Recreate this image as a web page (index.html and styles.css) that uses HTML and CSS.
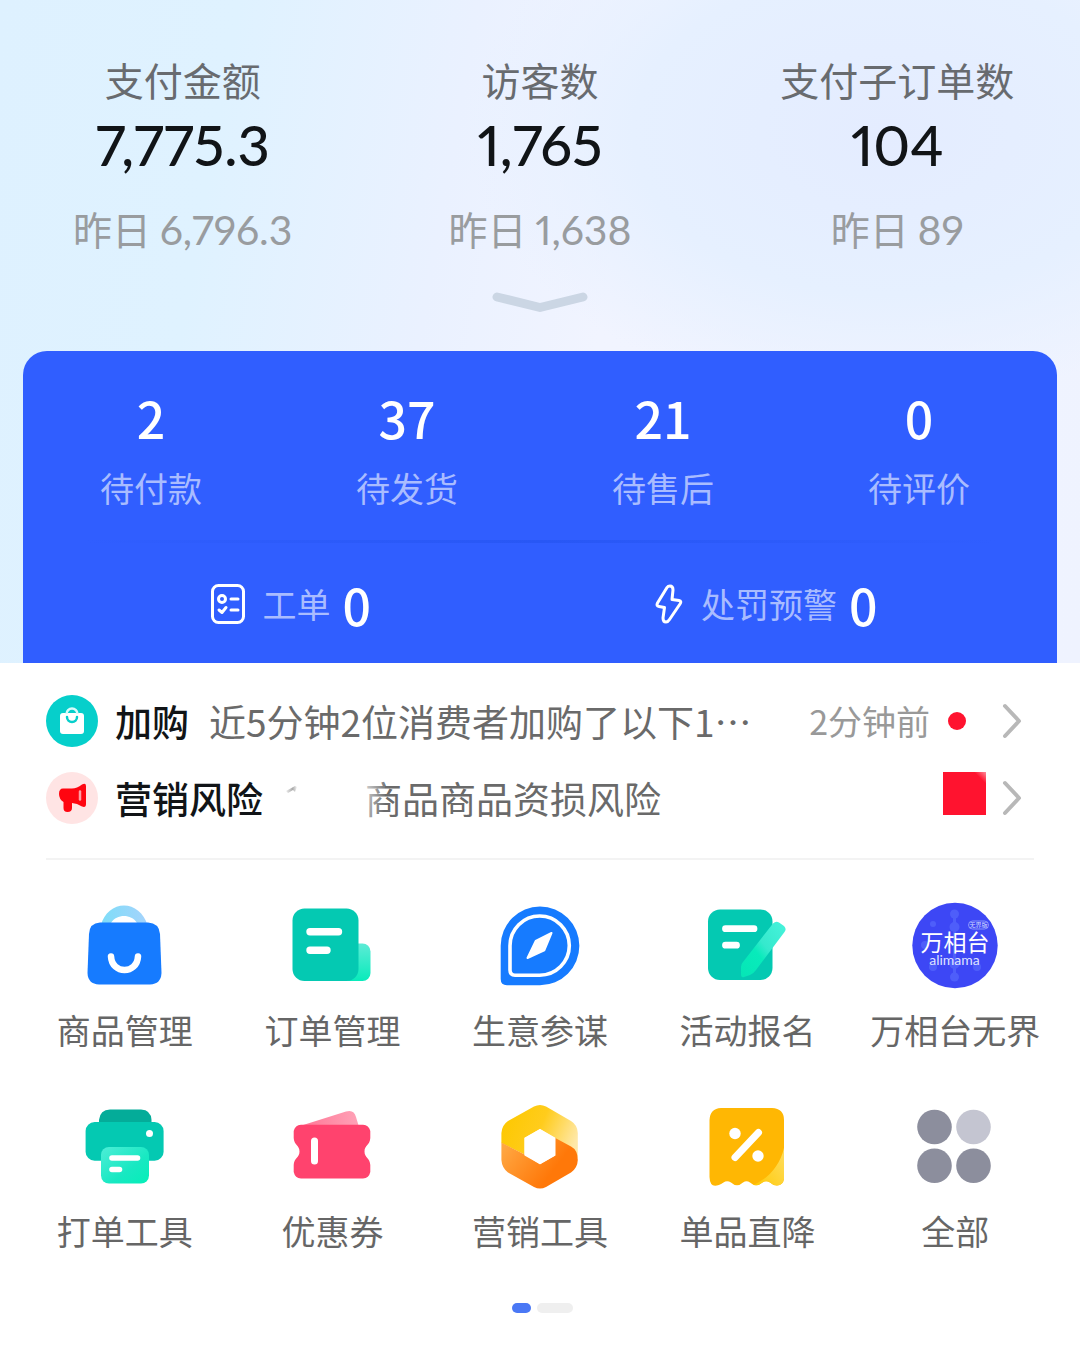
FILE: index.html
```html
<!DOCTYPE html>
<html lang="zh-CN">
<head>
<meta charset="utf-8">
<meta name="viewport" content="width=device-width, initial-scale=1">
<title>店铺工作台</title>
<link rel="stylesheet" href="styles.css">
</head>
<body>
<header class="hero">
  <section class="stats">
    <div class="stat"><h2 class="stat-label">支付金额</h2><p class="stat-value">7,775.3</p><p class="stat-prev">昨日 <span class="stat-num">6,796.3</span></p></div>
    <div class="stat"><h2 class="stat-label">访客数</h2><p class="stat-value">1,765</p><p class="stat-prev">昨日 <span class="stat-num">1,638</span></p></div>
    <div class="stat"><h2 class="stat-label">支付子订单数</h2><p class="stat-value">104</p><p class="stat-prev">昨日 <span class="stat-num">89</span></p></div>
  </section>
  <button class="expand" type="button" aria-label="展开">
    <svg width="96" height="24" viewBox="0 0 96 24" fill="none" stroke="#cbd6e4" stroke-width="9" stroke-linecap="round" stroke-linejoin="round"><path d="M5 7 48 17.500 91 7"/></svg>
  </button>
  <section class="panel">
    <div class="orders">
      <a class="order" href="#"><span class="order-num">2</span><span class="order-label">待付款</span></a>
      <a class="order" href="#"><span class="order-num">37</span><span class="order-label">待发货</span></a>
      <a class="order" href="#"><span class="order-num">21</span><span class="order-label">待售后</span></a>
      <a class="order" href="#"><span class="order-num">0</span><span class="order-label">待评价</span></a>
    </div>
    <div class="panel-line"></div>
    <div class="tasks">
      <a class="task" href="#">
        <svg width="34" height="40" viewBox="0 0 34 40" fill="none" stroke="#fff" stroke-width="3" stroke-linecap="round" stroke-linejoin="round"><rect x="1.500" y="1.500" width="31" height="37" rx="6"/><circle cx="11" cy="15" r="3.500"/><path d="M20 15h7M20 26h7M8 26l3 2.500 4-5"/></svg>
        <span class="task-label">工单</span><span class="task-num">0</span>
      </a>
      <a class="task" href="#">
        <svg width="28" height="40" viewBox="0 0 28 40" fill="none" stroke="#fff" stroke-width="3" stroke-linejoin="round"><path d="M12 3.500 2.500 19Q1 22 4 22.500L9.500 23.500 8 34Q8 38 11 38 13 38 14.500 35.500L25 20Q27 17 24 16.500L17 15.500 18 6Q18 2 15 2 13 2 12 3.500Z"/></svg>
        <span class="task-label">处罚预警</span><span class="task-num">0</span>
      </a>
    </div>
  </section>
</header>
<main>
  <section class="notices">
    <a class="notice" href="#">
      <svg class="notice-icon" viewBox="0 0 52 52"><circle cx="26" cy="26" r="26" fill="#06cfcb"/><path d="M17 18H35Q38 18 38 21V36Q38 39 35 39H17Q14 39 14 36V21Q14 18 17 18Z" fill="#fff"/><path d="M20.500 19a5.500 5.500 0 0 1 11 0" fill="none" stroke="#d9fbfa" stroke-width="2.500"/><path d="M21 22a5 5 0 0 0 10 0" fill="none" stroke="#06cfcb" stroke-width="2.500" stroke-linecap="round"/></svg>
      <strong class="notice-title">加购</strong>
      <span class="notice-text">近5分钟2位消费者加购了以下1…</span>
      <span class="notice-time">2分钟前</span><span class="dot"></span>
      <svg class="arrow" viewBox="0 0 20 36"><path d="M3 3 17 18 3 33"/></svg>
    </a>
    <a class="notice" href="#">
      <svg class="notice-icon" viewBox="0 0 52 52"><circle cx="26" cy="26" r="26" fill="#ffe4e4"/><path d="M17 16.500H26Q31 16.500 36 12.500 40 10.500 40 14V32Q40 36 36 34.500 31 31 26 31V36Q26 40 21.500 40 17.500 40 17.500 36V30Q13 27 13 22 13 16.500 17 16.500Z" fill="#ff0510"/><path d="M34 19.500v8" stroke="#ff9ea2" stroke-width="2.500" stroke-linecap="round"/></svg>
      <strong class="notice-title">营销风险</strong>
      <svg class="smudge" viewBox="0 0 14 12"><defs><linearGradient id="sm" x2="1"><stop stop-color="#eee"/><stop offset=".6" stop-color="#aaa"/><stop offset="1" stop-color="#f4f4f4"/></linearGradient></defs><path d="M1 6 10 1 12 2 10 7 8 5 3 8Z" fill="url(#sm)"/></svg>
      <span class="notice-text notice-text-faded">商品商品资损风险</span>
      <span class="square"></span>
      <svg class="arrow" viewBox="0 0 20 36"><path d="M3 3 17 18 3 33"/></svg>
    </a>
  </section>
  <nav class="tools">
    <a class="tool" href="#">
      <svg class="tool-icon" viewBox="0 0 88 88"><defs><linearGradient id="g1" x2="1"><stop stop-color="#7eddf8"/><stop offset="1" stop-color="#a5d3fc"/></linearGradient></defs><path fill-rule="evenodd" d="M20 23C23 11 33 3.500 43 3.500S63 11 66.500 23ZM30 21H56C53 16 48 14 43 14S33 16 30 21Z" fill="url(#g1)"/><path d="M19 20.500H67Q78 21 79 32L80.500 71Q80 82 69 82.500H18Q7 82 6.500 71L8 32Q8.500 21 19 20.500Z" fill="#167bff"/><path d="M30 54.500C31 72.500 56 72.500 57 54.500" fill="none" stroke="#fff" stroke-width="6.500" stroke-linecap="round"/></svg>
      <span class="tool-label">商品管理</span>
    </a>
    <a class="tool" href="#">
      <svg class="tool-icon" viewBox="-1 0 88 88"><defs><linearGradient id="g2" y2="1" x2="0"><stop stop-color="#5debd6"/><stop offset="1" stop-color="#08ebbb"/></linearGradient></defs><rect x="52" y="41.500" width="29.500" height="37.500" rx="8" fill="url(#g2)"/><rect x="3.500" y="6.500" width="66" height="72.500" rx="12" fill="#04c9b2"/><path d="M21 29.700H49.500M21 48.200H38" stroke="#fff" stroke-width="7.400" stroke-linecap="round"/></svg>
      <span class="tool-label">订单管理</span>
    </a>
    <a class="tool" href="#">
      <svg class="tool-icon" viewBox="0 0 88 88"><path d="M44 4.500A39.300 39.300 0 1 1 44 83.200H11Q4.700 83.200 4.700 77V43.800A39.300 39.300 0 0 1 44 4.500Z" fill="#167bff"/><path d="M43.700 14A29.600 29.600 0 1 1 43.700 73.200H19Q14 73.200 14 68V43.700A29.700 29.700 0 0 1 43.700 14Z" fill="none" stroke="#fff" stroke-width="3.600"/><path d="M55.500 31 39.700 39 31.500 56 48.300 48.300Z" fill="#fff" stroke="#fff" stroke-width="2" stroke-linejoin="round"/></svg>
      <span class="tool-label">生意参谋</span>
    </a>
    <a class="tool" href="#">
      <svg class="tool-icon" viewBox="1 0 88 88"><defs><linearGradient id="g4" x1="1" x2="0" y2="1"><stop stop-color="#48f3dc"/><stop offset=".45" stop-color="#35e9cd"/><stop offset=".6" stop-color="#08ebbb"/><stop offset="1" stop-color="#05e6b6"/></linearGradient></defs><rect x="5" y="7.500" width="64.500" height="70.500" rx="12" fill="#04c9b2"/><path d="M22.500 26.700H51M22.500 43.200H33.500" stroke="#fff" stroke-width="6.800" stroke-linecap="round"/><path d="M70 21.500Q73 18.500 76 20.500L81 24Q84 27 81.500 30L53 68Q51 71 47 73L41 75Q38 76 38 72V65Q38 62 40 60Z" fill="url(#g4)"/></svg>
      <span class="tool-label">活动报名</span>
    </a>
    <a class="tool" href="#">
      <svg class="tool-icon" viewBox="0 0 88 88"><circle cx="44" cy="43.500" r="42.700" fill="#3d47f5"/><g fill="#5d72ff" opacity=".55"><circle cx="43.500" cy="12" r="4.500"/><circle cx="43.500" cy="25" r="5"/><circle cx="43.500" cy="62" r="5"/><circle cx="43.500" cy="75" r="4.500"/><circle cx="22" cy="22" r="3"/><circle cx="14" cy="43" r="4"/><circle cx="22" cy="65" r="4"/><circle cx="66" cy="65" r="4"/><path d="M42 12h3v63h-3z"/></g><text class="logo-cn" x="44" y="49" text-anchor="middle">万相台</text><text class="logo-en" x="43.500" y="63" text-anchor="middle">alimama</text><rect x="57.500" y="19" width="20" height="8" rx="4" fill="none" stroke="#aab4ff" stroke-width=".7"/><text class="logo-tag" x="67.500" y="25" text-anchor="middle">无界版</text></svg>
      <span class="tool-label">万相台无界</span>
    </a>
    <a class="tool" href="#">
      <svg class="tool-icon" viewBox="0 0 88 88"><defs><linearGradient id="g6" x2="1" y2="1"><stop stop-color="#4deed7"/><stop offset=".6" stop-color="#18e8c2"/><stop offset="1" stop-color="#04efb8"/></linearGradient></defs><path d="M18 22V17Q19 6.500 29 6.500H60Q70 7 70.500 17V22Z" fill="#04ac99"/><rect x="4.600" y="19" width="78" height="38.700" rx="9" fill="#04c9b2"/><circle cx="68.500" cy="30.500" r="3.500" fill="#fff"/><rect x="20" y="44" width="48" height="36.500" rx="8" fill="url(#g6)"/><path d="M31 55H56.500M31 66.500H38.500" stroke="#fff" stroke-width="5.600" stroke-linecap="round"/></svg>
      <span class="tool-label">打单工具</span>
    </a>
    <a class="tool" href="#">
      <svg class="tool-icon" viewBox="-1 0 88 88"><defs><linearGradient id="g7" x2="1"><stop stop-color="#ff7594"/><stop offset="1" stop-color="#ffa2b7"/></linearGradient></defs><path d="M11 23 57 8.500Q65 6 67 14L70 24Z" fill="url(#g7)"/><path d="M12 21.700H74Q80 22 81.300 28V35C81 42 75.500 42 75.500 48.500S81 55 81.300 62V69Q80 75 74 75.500H12Q6 75 4.700 69V62C5 55 10.500 55 10.500 48.500S5 42 4.700 35V28Q6 22 12 21.700Z" fill="#ff436e"/><path d="M25.500 38V58" stroke="#fff" stroke-width="7" stroke-linecap="round"/></svg>
      <span class="tool-label">优惠券</span>
    </a>
    <a class="tool" href="#">
      <svg class="tool-icon" viewBox="0 0 88 88"><defs><linearGradient id="g8" x1="0" y1=".3" x2="1" y2=".6"><stop stop-color="#fdc800"/><stop offset=".5" stop-color="#ffcc1c"/><stop offset="1" stop-color="#ffe8a8"/></linearGradient><linearGradient id="g9" x2="1" y2=".5"><stop stop-color="#ffad49"/><stop offset=".8" stop-color="#ff7809"/></linearGradient></defs><path d="M38 3.500Q44 .500 50 3.500L75 18Q81.500 22 81.800 30V55L59 35 44 26 28.500 35V51.500L5.400 40V30Q6 22 12 18Z" fill="url(#g8)"/><path d="M5.400 39.500 28.500 51.500 44 61.300 59.300 52.500V35L75 43.500Q81.800 47 81.800 57 81.500 65 75 69.500L50 84Q44 87 38 84L12 69.500Q6 65 5.400 57Z" fill="url(#g9)"/><path d="M44 26 59.300 34.700V52.500L44 61.300 28.500 52.500V34.700Z" fill="#fff"/></svg>
      <span class="tool-label">营销工具</span>
    </a>
    <a class="tool" href="#">
      <svg class="tool-icon" viewBox="1 0 88 88"><defs><linearGradient id="g10" x1="1" x2="0" y2="1"><stop stop-color="#ffe06b"/><stop offset="1" stop-color="#ffc800"/></linearGradient><clipPath id="c10"><path d="M18 5H69Q81 5.500 81 17V76Q80 82 74 82.500 70 82.500 67 79.500 63 77 59.500 79.500 53 85 47 79.500 43.500 77 40 79.500 34 85 28 79.500 24 77 20.500 79.500 7 88 6.500 74V17Q7 5.500 18 5Z"/></clipPath></defs><g clip-path="url(#c10)"><path d="M0 0H88V88H0Z" fill="#ffb703"/><path d="M82 38C80 60 66 76 48 83H82Z" fill="url(#g10)"/></g><circle cx="32" cy="30.500" r="5.700" fill="#fff"/><circle cx="55" cy="53" r="5.700" fill="#fff"/><path d="M55.500 29.500 32 54.500" stroke="#fff" stroke-width="7" stroke-linecap="round"/></svg>
      <span class="tool-label">单品直降</span>
    </a>
    <a class="tool" href="#">
      <svg class="tool-icon" viewBox="0 0 88 88"><g fill="#8c8e9d"><circle cx="23.500" cy="24" r="17.300"/><circle cx="62.500" cy="24" r="17.300" fill="#c4c5d1"/><circle cx="23.500" cy="62.700" r="17.300"/><circle cx="62.500" cy="62.700" r="17.300"/></g></svg>
      <span class="tool-label">全部</span>
    </a>
  </nav>
  <div class="pager"><span class="page page-on"></span><span class="page"></span></div>
</main>
</body>
</html>
```
FILE: styles.css
```css
* {
  box-sizing: border-box;
}
body {
  margin: 0;
  background: #fff;
  color: #111417;
  font-family: "Noto Sans CJK SC", sans-serif;
}
h2,
p {
  margin: 0;
  font-weight: 400;
}
a {
  color: inherit;
  text-decoration: none;
}
svg {
  display: block;
  flex: none;
}
.hero {
  padding-top: 57px;
  background:
    radial-gradient(ellipse 420px 270px at 82% 20%, #e4ecff 0%, #e6f0ff 60%, #e6f0ff00 100%),
    linear-gradient(100deg, #def1ff 0%, #dff2ff 20%, #eaf1ff 40%, #f1f4ff 55%, #eff3ff 100%);
}
.stats {
  display: grid;
  grid-template-columns: repeat(3, 1fr);
  padding: 0 4px;
  text-align: center;
}
.stat-label {
  font-size: 39px;
  line-height: 44px;
  color: #686b6f;
}
.stat-value,
.stat-num {
  font-family: Lato, "Noto Sans CJK SC", sans-serif;
  font-variant-numeric: proportional-nums;
}
.stat-value {
  margin-top: 10px;
  font-size: 56px;
  font-weight: 500;
  line-height: 68px;
}
.stat-prev {
  margin-top: 27px;
  font-size: 39px;
  line-height: 44px;
  color: #999c9f;
}
.stat-num {
  font-size: 41px;
}
.expand {
  display: block;
  margin: 38px auto 0;
  padding: 0;
  border: 0;
  background: none;
}
.panel {
  margin: 37px 23px 0;
  padding-top: 36px;
  border-radius: 24px 24px 0 0;
  background: #305eff;
  color: #fff;
}
.orders {
  display: grid;
  grid-template-columns: repeat(4, 1fr);
  padding-right: 10px;
}
.order {
  display: flex;
  flex-direction: column;
  align-items: center;
  gap: 21px;
}
.order-num,
.task-num {
  font-size: 50px;
  font-weight: 500;
  line-height: 60px;
}
.order-label,
.task-label {
  font-size: 34px;
  line-height: 40px;
  color: #a9bcff;
}
.panel-line {
  height: 3px;
  margin: 32px 60px 0;
  background: linear-gradient(90deg, transparent, #2857f5, transparent);
}
.tasks {
  display: flex;
  justify-content: center;
  gap: 284px;
  padding: 31px 0 29px 8px;
}
.task {
  display: flex;
  align-items: center;
}
.task-label {
  margin: 0 12px 0 18px;
}
.notices {
  margin: 0 46px;
  padding: 19px 0 22px;
  border-bottom: 2px solid #f3f3f3;
}
.notice {
  display: flex;
  align-items: center;
  height: 77px;
  font-size: 37px;
  line-height: 48px;
  white-space: nowrap;
}
.notice-icon {
  width: 52px;
  height: 52px;
}
.notice-title {
  margin: 0 20px 0 17px;
  font-weight: 500;
}
.notice-text {
  flex: 1;
  color: #6a6a6a;
}
.notice-text-faded {
  position: relative;
}
.notice-text-faded::before {
  content: "";
  position: absolute;
  inset: 0 auto 0 0;
  width: 20px;
  background: linear-gradient(100deg, #ffffffaa 10%, #ffffff00 90%);
}
.smudge {
  width: 14px;
  height: 12px;
  margin: 0 66px 14px 2px;
}
.notice-time {
  font-size: 34px;
  color: #999;
}
.dot {
  width: 18px;
  height: 18px;
  margin: 0 36px 0 18px;
  border-radius: 50%;
  background: #ff132f;
}
.square {
  width: 43px;
  height: 43px;
  margin: 0 16px 8px 0;
  background: linear-gradient(225deg, #ff8c9a, #ff132f 14%);
}
.arrow {
  width: 20px;
  height: 36px;
  margin-right: 12px;
  fill: none;
  stroke: #b8b8b8;
  stroke-width: 4px;
  stroke-linecap: round;
  stroke-linejoin: round;
}
.tools {
  display: grid;
  grid-template-columns: repeat(5, 1fr);
  row-gap: 51px;
  padding: 42px 21px 0;
}
.tool {
  display: flex;
  flex-direction: column;
  align-items: center;
  gap: 18px;
}
.tool-icon {
  width: 88px;
  height: 88px;
}
.tool-label {
  font-size: 34px;
  line-height: 44px;
  color: #666;
  white-space: nowrap;
}
.logo-cn {
  font-size: 23px;
  fill: #fff;
}
.logo-en {
  font-family: Lato, sans-serif;
  font-size: 14px;
  fill: #dfe3ff;
}
.logo-tag {
  font-size: 6px;
  fill: #d5daff;
}
.pager {
  display: flex;
  justify-content: center;
  gap: 6px;
  padding: 50px 0 59px 4px;
}
.page {
  width: 36px;
  height: 10px;
  border-radius: 5px;
  background: #efefef;
}
.page-on {
  width: 19px;
  background: #4a78f5;
}
```
